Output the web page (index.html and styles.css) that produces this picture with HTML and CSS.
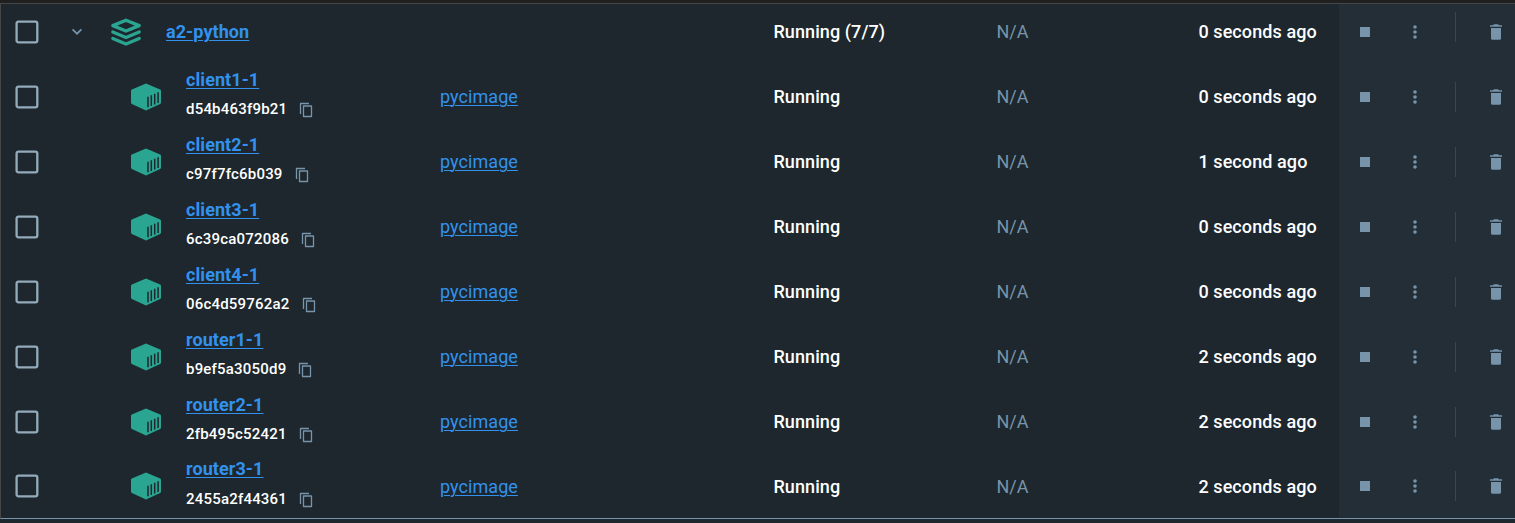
FILE: index.html
```html
<!DOCTYPE html>
<html lang="en">
<head>
<meta charset="utf-8">
<title>Containers</title>
<link rel="stylesheet" href="styles.css">
</head>
<body>
<svg class="defs" aria-hidden="true">
  <symbol id="check" viewBox="0 0 24 24"><rect x="1.600" y="1.600" width="20.700" height="20.700" rx="1.800" fill="none" stroke="currentColor" stroke-width="2.300"/></symbol>
  <symbol id="chevron" viewBox="0 0 12 8"><path d="M1.6 1.3 6 5.7l4.4-4.4" fill="none" stroke="currentColor" stroke-width="1.7"/></symbol>
  <symbol id="stack" viewBox="0 0 32 28"><g fill="none" stroke="currentColor" stroke-width="3.300" stroke-linejoin="round" stroke-linecap="round"><path d="M16 2.2 29.200 7.600 16 13 2.800 7.600z"/><path d="M2.800 14 16 19.500l13.200-5.500M2.800 20.500 16 26l13.200-5.500"/></g></symbol>
  <symbol id="box" viewBox="0 0 30 28"><path d="M15 .5 29.200 6.500Q30 6.900 30 7.800V19.500Q30 20.400 29.200 20.900L15 27.500.8 20.900Q0 20.400 0 19.500V7.800Q0 6.900.8 6.500z" fill="currentColor"/><path d="M17 13.800v10.500M20.300 12.200v10.700M23.700 10.700v10.700M27.100 9.200v10.700" class="slats"/></symbol>
  <symbol id="copy" viewBox="0 0 14 16"><path d="M1.500 12V1.500H10M4.500 4h8v10.500h-8z" fill="none" stroke="currentColor" stroke-width="1.300" stroke-linejoin="round"/></symbol>
  <symbol id="dots" viewBox="0 0 4 14"><g fill="currentColor"><circle cx="2" cy="2" r="1.800"/><circle cx="2" cy="7" r="1.800"/><circle cx="2" cy="12" r="1.800"/></g></symbol>
  <symbol id="trash" viewBox="0 0 12 16"><path d="M0 1.200h3L4 .2h4l1 1h3v1.600H0zM1 4h10v10.300q0 1.500-1.500 1.500h-7Q1 15.800 1 14.300z" fill="currentColor"/></symbol>
</svg>
<main class="table">
  <div class="row group">
    <svg class="check"><use href="#check"/></svg><span class="toggle"><svg class="chevron"><use href="#chevron"/></svg></span>
    <div class="name"><svg class="stack"><use href="#stack"/></svg><a class="title">a2-python</a></div>
    <span></span><span class="cell">Running (7/7)</span><span class="cell muted">N/A</span><span class="cell">0 seconds ago</span>
    <div class="actions"><i class="stop"></i><svg class="dots"><use href="#dots"/></svg><i class="rule"></i><svg class="trash"><use href="#trash"/></svg></div>
  </div>
  <div class="row">
    <svg class="check"><use href="#check"/></svg><span></span>
    <div class="name child"><svg class="box"><use href="#box"/></svg><div class="label"><a class="title">client1-1</a><div class="id">d54b463f9b21<svg class="copy"><use href="#copy"/></svg></div></div></div>
    <a class="image">pycimage</a><span class="cell">Running</span><span class="cell muted">N/A</span><span class="cell">0 seconds ago</span>
    <div class="actions"><i class="stop"></i><svg class="dots"><use href="#dots"/></svg><i class="rule"></i><svg class="trash"><use href="#trash"/></svg></div>
  </div>
  <div class="row">
    <svg class="check"><use href="#check"/></svg><span></span>
    <div class="name child"><svg class="box"><use href="#box"/></svg><div class="label"><a class="title">client2-1</a><div class="id">c97f7fc6b039<svg class="copy"><use href="#copy"/></svg></div></div></div>
    <a class="image">pycimage</a><span class="cell">Running</span><span class="cell muted">N/A</span><span class="cell">1 second ago</span>
    <div class="actions"><i class="stop"></i><svg class="dots"><use href="#dots"/></svg><i class="rule"></i><svg class="trash"><use href="#trash"/></svg></div>
  </div>
  <div class="row">
    <svg class="check"><use href="#check"/></svg><span></span>
    <div class="name child"><svg class="box"><use href="#box"/></svg><div class="label"><a class="title">client3-1</a><div class="id">6c39ca072086<svg class="copy"><use href="#copy"/></svg></div></div></div>
    <a class="image">pycimage</a><span class="cell">Running</span><span class="cell muted">N/A</span><span class="cell">0 seconds ago</span>
    <div class="actions"><i class="stop"></i><svg class="dots"><use href="#dots"/></svg><i class="rule"></i><svg class="trash"><use href="#trash"/></svg></div>
  </div>
  <div class="row">
    <svg class="check"><use href="#check"/></svg><span></span>
    <div class="name child"><svg class="box"><use href="#box"/></svg><div class="label"><a class="title">client4-1</a><div class="id">06c4d59762a2<svg class="copy"><use href="#copy"/></svg></div></div></div>
    <a class="image">pycimage</a><span class="cell">Running</span><span class="cell muted">N/A</span><span class="cell">0 seconds ago</span>
    <div class="actions"><i class="stop"></i><svg class="dots"><use href="#dots"/></svg><i class="rule"></i><svg class="trash"><use href="#trash"/></svg></div>
  </div>
  <div class="row">
    <svg class="check"><use href="#check"/></svg><span></span>
    <div class="name child"><svg class="box"><use href="#box"/></svg><div class="label"><a class="title">router1-1</a><div class="id">b9ef5a3050d9<svg class="copy"><use href="#copy"/></svg></div></div></div>
    <a class="image">pycimage</a><span class="cell">Running</span><span class="cell muted">N/A</span><span class="cell">2 seconds ago</span>
    <div class="actions"><i class="stop"></i><svg class="dots"><use href="#dots"/></svg><i class="rule"></i><svg class="trash"><use href="#trash"/></svg></div>
  </div>
  <div class="row">
    <svg class="check"><use href="#check"/></svg><span></span>
    <div class="name child"><svg class="box"><use href="#box"/></svg><div class="label"><a class="title">router2-1</a><div class="id">2fb495c52421<svg class="copy"><use href="#copy"/></svg></div></div></div>
    <a class="image">pycimage</a><span class="cell">Running</span><span class="cell muted">N/A</span><span class="cell">2 seconds ago</span>
    <div class="actions"><i class="stop"></i><svg class="dots"><use href="#dots"/></svg><i class="rule"></i><svg class="trash"><use href="#trash"/></svg></div>
  </div>
  <div class="row last">
    <svg class="check"><use href="#check"/></svg><span></span>
    <div class="name child"><svg class="box"><use href="#box"/></svg><div class="label"><a class="title">router3-1</a><div class="id">2455a2f44361<svg class="copy"><use href="#copy"/></svg></div></div></div>
    <a class="image">pycimage</a><span class="cell">Running</span><span class="cell muted">N/A</span><span class="cell">2 seconds ago</span>
    <div class="actions"><i class="stop"></i><svg class="dots"><use href="#dots"/></svg><i class="rule"></i><svg class="trash"><use href="#trash"/></svg></div>
  </div>
</main>
</body>
</html>
```
FILE: styles.css
```css
* { box-sizing: border-box; }
body {
  margin: 0;
  height: 523px;
  overflow: hidden;
  background: #1d272d;
  border-top: 3px solid #202020;
  color: #fff;
  font: 500 18px/22px Roboto, sans-serif;
}
svg { display: block; flex: none; }
.defs { position: absolute; width: 0; height: 0; }
.table {
  height: 516px;
  border-top: 1px solid #464646;
  border-left: 1px solid #464646;
  border-bottom: 1px solid #7794ab;
}
.row {
  display: grid;
  grid-template-columns: 53px 56px 330px 333px 223px 202px 141px 176px;
  align-items: center;
  height: 65px;
}
.row.group { height: 61px; padding-bottom: 5px; }
.row:not(.group) { padding-bottom: 2px; }
.row.last { height: 63px; padding-bottom: 1px; }
.check { width: 24px; height: 24px; margin-left: 14px; color: #94abbc; }
.toggle { padding-left: 17px; color: #7794ab; }
.chevron { width: 12px; height: 8px; }
.name { display: flex; align-items: center; gap: 24px; }
.child { padding-left: 21px; gap: 25px; }
.stack { width: 32px; height: 28px; color: #2aa591; }
.box { width: 30px; height: 28px; color: #2aa591; }
.slats { fill: none; stroke: #1d272d; stroke-width: 1.500px; }
.title, .image {
  color: #3391ee;
  text-decoration: underline;
  text-decoration-thickness: 1px;
  text-underline-offset: 2px;
}
.title { font-weight: 700; letter-spacing: 0.08px; }
.image { font-weight: 400; letter-spacing: 0.06px; }
.cell { padding-left: 0.4px; letter-spacing: 0.09px; }
.label {
  display: flex;
  flex-direction: column;
  align-items: flex-start;
  gap: 7px;
  padding-bottom: 4px;
}
.id { display: flex; align-items: center; gap: 12px; font-size: 15px; letter-spacing: 0.2px; }
.copy { width: 14px; height: 16px; margin-top: 1px; color: #7794ab; }
.muted { color: #7794ab; font-weight: 400; }
.last .cell, .last .image { padding-top: 2px; }
.last .label { gap: 8px; }
.actions {
  display: flex;
  align-items: center;
  align-self: stretch;
  margin-bottom: -2px;
  padding: 0 0 2px 21px;
  background: #232e37;
  color: #7794ab;
}
.group .actions { margin-bottom: -5px; padding-bottom: 5px; }
.last .actions { margin-bottom: -1px; padding-bottom: 1px; }
.stop { width: 10px; height: 10px; margin-right: 43px; background: #7794ab; }
.dots { width: 4px; height: 14px; margin-right: 38px; }
.rule { width: 1px; height: 30px; margin-right: 34px; background: #394650; }
.group .rule { margin-top: -10px; }
.trash { width: 12px; height: 16px; }
```
